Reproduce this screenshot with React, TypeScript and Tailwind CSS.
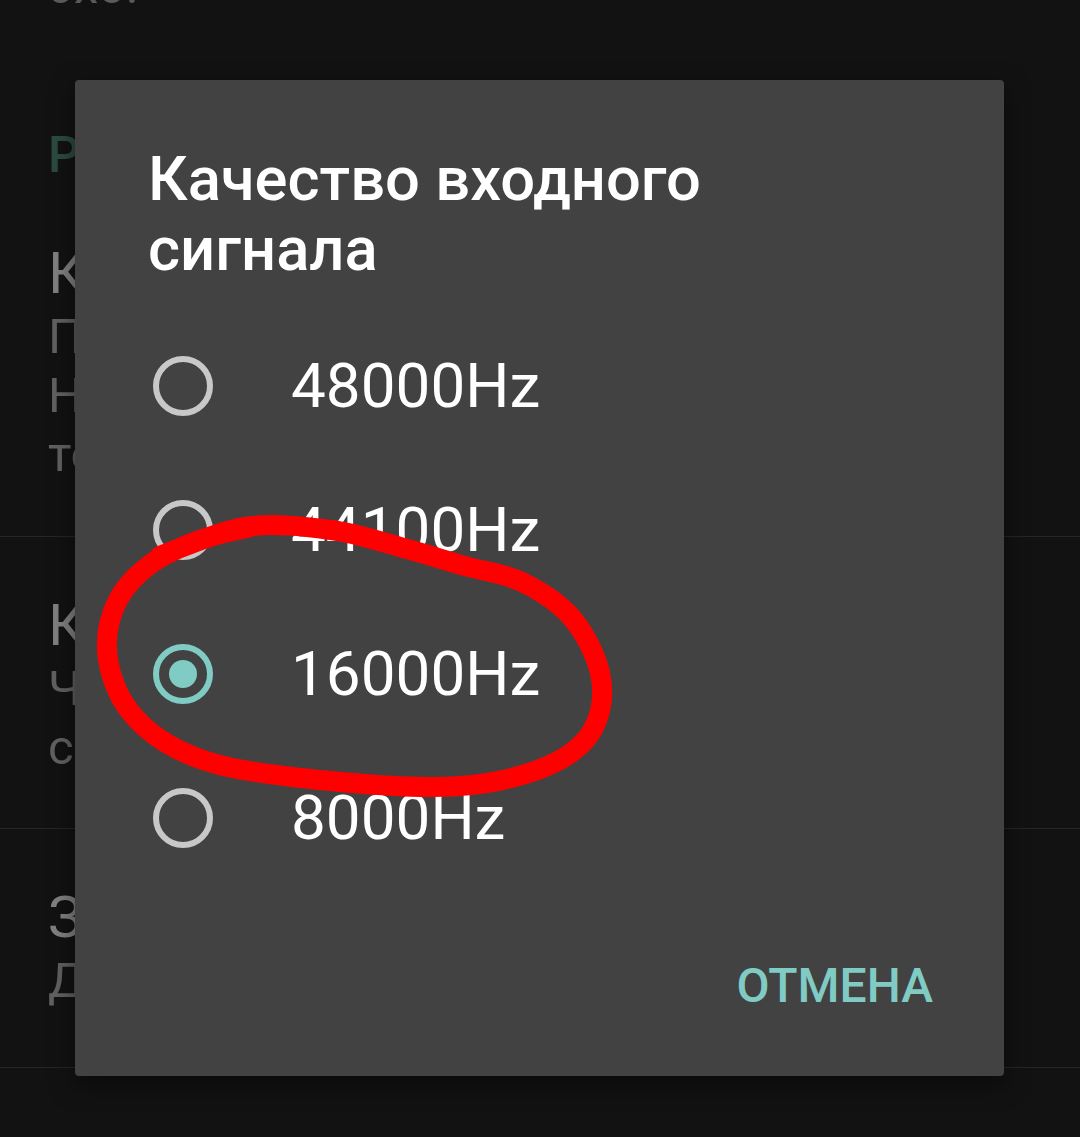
import React from "react";

interface SettingItem {
	title: string;
	summary: string[];
}

const items: SettingItem[] = [
	{
		title: "Кодек записи",
		summary: [
			"Пожалуйста, выберите формат.",
			"Некоторые форматы работают",
			"только на новых устройствах.",
		],
	},
	{
		title: "Качество входного сигнала",
		summary: ["Частота дискретизации", "сигнала: 16000Hz"],
	},
	{
		title: "Запись в фоне",
		summary: ["Держать запись активной"],
	},
];

const options = ["48000Hz", "44100Hz", "16000Hz", "8000Hz"];
const selected = "16000Hz";

// points of the hand drawn marker loop, in page coordinates
const loop: [number, number][] = [
	[160, 556],
	[245, 527],
	[331, 530],
	[400, 547],
	[465, 566],
	[522, 582],
	[572, 618],
	[600, 673],
	[596, 723],
	[565, 757],
	[503, 780],
	[434, 787],
	[331, 781],
	[228, 767],
	[166, 743],
	[124, 703],
	[107, 650],
	[118, 600],
	[152, 563],
	[200, 540],
	[250, 527],
];

const smoothPath = (pts: [number, number][]) => {
	let d = `M${pts[0][0]} ${pts[0][1]}`;
	for (let i = 0; i < pts.length - 1; i++) {
		const p0 = pts[i - 1] ?? pts[i];
		const p1 = pts[i];
		const p2 = pts[i + 1];
		const p3 = pts[i + 2] ?? p2;
		const c1x = p1[0] + (p2[0] - p0[0]) / 6;
		const c1y = p1[1] + (p2[1] - p0[1]) / 6;
		const c2x = p2[0] - (p3[0] - p1[0]) / 6;
		const c2y = p2[1] - (p3[1] - p1[1]) / 6;
		d += ` C${c1x} ${c1y} ${c2x} ${c2y} ${p2[0]} ${p2[1]}`;
	}
	return d;
};

const Radio = ({ checked }: { checked: boolean }) =>
	checked ? (
		<div className="flex size-[60px] items-center justify-center rounded-full border-[6px] border-[#80cbc4]">
			<div className="size-[28px] rounded-full bg-[#80cbc4]" />
		</div>
	) : (
		<div className="size-[60px] rounded-full border-[6px] border-[#c8c8c8]" />
	);

const App = () => {
	return (
		<div className="relative h-[1137px] w-[1080px] overflow-hidden bg-[#121212] font-['Roboto',sans-serif]">
			{/* settings screen behind the dialog */}
			<div className="flex flex-col">
				<p className="-mt-[43px] pl-[48px] text-[49px] leading-[60px] text-[#5a5a5a]">эхо.</p>
				<p className="mt-[108px] pl-[48px] text-[50px] font-medium leading-[60px] text-[#2c4a41]">
					Расширенные
				</p>
				{items.map((item, i) => (
					<div
						key={item.title}
						className={`flex flex-col px-[48px] pt-[54px] ${i === 0 ? "pb-[52px]" : i === 1 ? "pb-[51px]" : "pb-[57px]"} border-b border-[#262626]`}
					>
						<p className="whitespace-nowrap text-[58px] leading-[68px] text-[#808080]">{item.title}</p>
						{item.summary.map((line) => (
							<p key={line} className="whitespace-nowrap text-[49px] leading-[59px] text-[#616161]">
								{line}
							</p>
						))}
					</div>
				))}
				<div className="px-[48px] pt-[64px]">
					<p className="whitespace-nowrap text-[58px] leading-[68px] text-[#808080]">Формат файла</p>
				</div>
			</div>

			{/* dialog */}
			<div className="absolute left-[75px] top-[80px] flex h-[996px] w-[929px] flex-col rounded-[4px] bg-[#424242] shadow-[0_8px_24px_rgba(0,0,0,0.5)]">
				<h2 className="pl-[73px] pr-[60px] pt-[64px] text-[61.5px] font-medium leading-[70px] text-white">
					Качество входного
					<br />
					сигнала
				</h2>
				<div className="mt-[30px] flex flex-col">
					{options.map((opt) => (
						<div key={opt} className="flex h-[144px] items-center pl-[78px]">
							<Radio checked={opt === selected} />
							<span className="ml-[78px] text-[62px] leading-none text-white">{opt}</span>
						</div>
					))}
				</div>
				<div className="mt-[71px] flex justify-end pr-[71px]">
					<button className="text-[48px] font-medium leading-[50px] text-[#80cbc4]">ОТМЕНА</button>
				</div>
			</div>

			{/* red marker annotation */}
			<svg
				className="pointer-events-none absolute inset-0"
				width="1080"
				height="1137"
				viewBox="0 0 1080 1137"
			>
				<path
					d={smoothPath(loop)}
					fill="none"
					stroke="#ff0000"
					strokeWidth="20"
					strokeLinecap="round"
					strokeLinejoin="round"
				/>
			</svg>
		</div>
	);
};

export default App;
